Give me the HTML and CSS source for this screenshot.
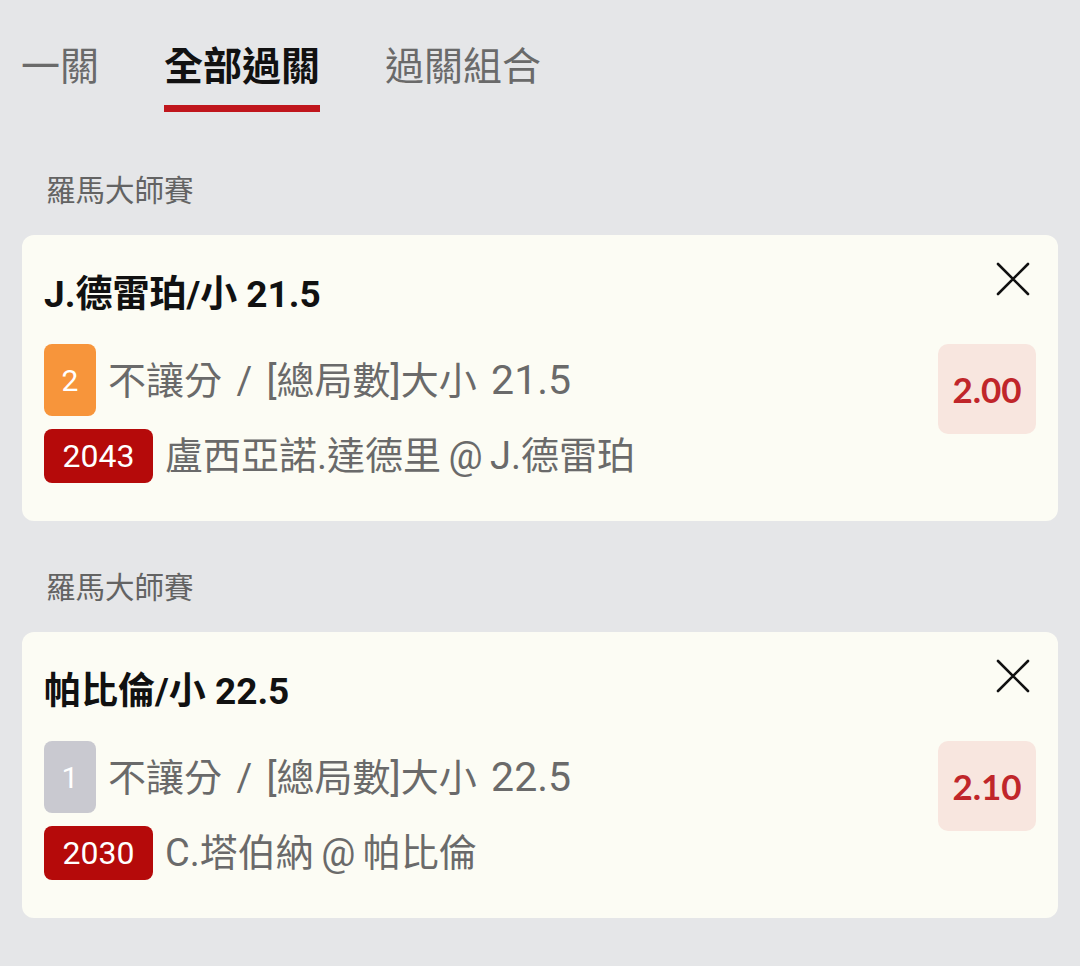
FILE: index.html
```html
<!DOCTYPE html>
<html lang="zh-Hant">
<head>
<meta charset="utf-8">
<link rel="stylesheet" href="styles.css">
</head>
<body>
<nav class="tabs">
  <div class="tab">一關</div>
  <div class="tab active">全部過關</div>
  <div class="tab">過關組合</div>
</nav>

<section class="group">
  <div class="league">羅馬大師賽</div>
  <div class="card">
    <div class="card-head">
      <div class="title">J.德雷珀/小 21.5</div>
      <svg class="close" width="34" height="34" viewBox="0 0 34 34"><path d="M2 2 L32 32 M32 2 L2 32" stroke="#111" stroke-width="2.6" fill="none" stroke-linecap="round"/></svg>
    </div>
    <div class="card-body">
      <div class="lines">
        <div class="line">
          <span class="leg leg-orange">2</span>
          <span class="desc desc-market">不讓分 / [總局數]大小 <span class="num">21.5</span></span>
        </div>
        <div class="line">
          <span class="code">2043</span>
          <span class="desc desc-match">盧西亞諾.達德里 @ J.德雷珀</span>
        </div>
      </div>
      <div class="odds">2.00</div>
    </div>
  </div>
</section>

<section class="group">
  <div class="league">羅馬大師賽</div>
  <div class="card">
    <div class="card-head">
      <div class="title">帕比倫/小 22.5</div>
      <svg class="close" width="34" height="34" viewBox="0 0 34 34"><path d="M2 2 L32 32 M32 2 L2 32" stroke="#111" stroke-width="2.6" fill="none" stroke-linecap="round"/></svg>
    </div>
    <div class="card-body">
      <div class="lines">
        <div class="line">
          <span class="leg leg-grey">1</span>
          <span class="desc desc-market">不讓分 / [總局數]大小 <span class="num">22.5</span></span>
        </div>
        <div class="line">
          <span class="code">2030</span>
          <span class="desc desc-match">C.塔伯納 @ 帕比倫</span>
        </div>
      </div>
      <div class="odds">2.10</div>
    </div>
  </div>
</section>
</body>
</html>
```

FILE: styles.css
```css
* { box-sizing: border-box; }
html, body {
  margin: 0;
  padding: 0;
  background: #e5e6e8;
  font-family: Roboto, "Noto Sans CJK TC", sans-serif;
}
body { width: 1080px; height: 966px; overflow: hidden; }

.tabs {
  display: flex;
  gap: 65px;
  padding: 41px 0 0 21px;
  align-items: flex-start;
}
.tab {
  font-size: 39px;
  line-height: 53px;
  color: #6a6a6a;
  padding-bottom: 18px;
}
.tab.active {
  color: #111;
  font-weight: 700;
  padding-bottom: 11px;
  border-bottom: 7px solid #c0161c;
}

.league {
  font-size: 29.5px;
  line-height: 40px;
  color: #636363;
  padding-left: 46px;
  margin-bottom: 24px;
}
.group:first-of-type .league { margin-top: 59px; }
.group + .group .league { margin-top: 47px; }

.card {
  margin: 0 22px;
  background: #fcfcf4;
  border-radius: 12px;
  padding: 27px 22px 38px 22px;
}
.card-head {
  display: flex;
  justify-content: space-between;
  align-items: flex-start;
}
.title {
  margin-top: 11px;
  font-size: 37px;
  line-height: 44px;
  font-weight: 700;
  color: #111;
}
.close { margin-right: 6px; display: block; }

.card-body {
  display: flex;
  justify-content: space-between;
  align-items: flex-start;
  margin-top: 27px;
}
.lines {
  display: flex;
  flex-direction: column;
  gap: 13px;
}
.line {
  display: flex;
  align-items: center;
  gap: 12px;
}
.leg {
  width: 52px;
  height: 72px;
  border-radius: 8px;
  color: #fff;
  font-size: 30px;
  display: flex;
  align-items: center;
  justify-content: center;
}
.leg-orange { background: #f7953b; }
.leg-grey { background: #c9c9d0; }
.code {
  height: 54px;
  min-width: 109px;
  padding: 0 14px;
  border-radius: 8px;
  background: #b50a0a;
  color: #fff;
  font-size: 32px;
  display: flex;
  align-items: center;
  justify-content: center;
}
.desc {
  font-size: 38px;
  line-height: 48px;
  color: #6a6a6a;
  white-space: nowrap;
}
.desc-market { word-spacing: 5px; }
.desc-match { word-spacing: -2px; }
.num { font-size: 41px; word-spacing: 0; }
.odds {
  width: 98px;
  height: 90px;
  border-radius: 10px;
  background: #f8e6df;
  color: #c0262a;
  font-family: Lato, "Noto Sans CJK TC", sans-serif;
  font-size: 35px;
  font-weight: 700;
  display: flex;
  align-items: center;
  justify-content: center;
}
```
